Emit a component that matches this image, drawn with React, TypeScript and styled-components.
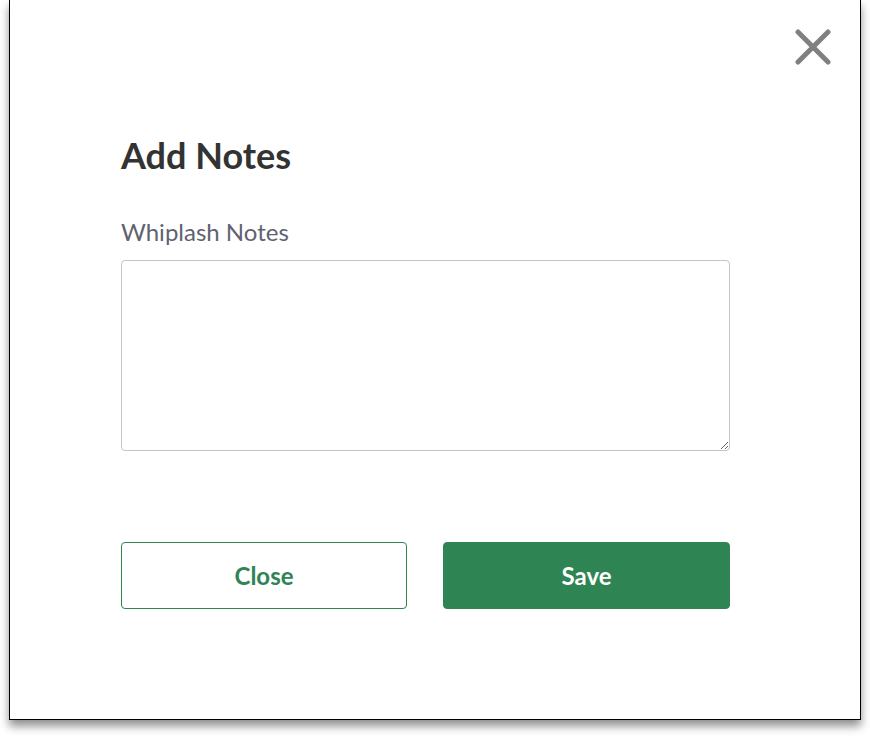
import React from "react";
import styled, { createGlobalStyle } from "styled-components";

const Global = createGlobalStyle`
  html, body { margin: 0; padding: 0; background: #fff; }
  body { font-family: Lato, "Open Sans", sans-serif; }
  * { box-sizing: border-box; }
`;

const Page = styled.div`
  width: 870px;
  height: 738px;
  padding-left: 9px;
  overflow: hidden;
`;

const Modal = styled.div`
  position: relative;
  width: 852px;
  height: 720px;
  background: #fff;
  border: 1px solid #000;
  border-top: none;
  box-shadow: 0 6px 9px rgba(0, 0, 0, 0.45);
  padding: 0 0 0 111px;
  display: flex;
  flex-direction: column;
`;

const CloseIcon = styled.button`
  position: absolute;
  top: 29px;
  right: 29px;
  width: 36px;
  height: 36px;
  padding: 0;
  border: none;
  background: none;
  display: flex;
  align-items: center;
  justify-content: center;
`;

const Content = styled.div`
  width: 609px;
  display: flex;
  flex-direction: column;
  padding-top: 135px;
`;

const Title = styled.h2`
  margin: 0;
  font-family: Lato, sans-serif;
  font-weight: 700;
  font-size: 36px;
  line-height: 40px;
  color: #333333;
`;

const Label = styled.label`
  margin-top: 42px;
  font-family: Lato, sans-serif;
  font-size: 24px;
  line-height: 30px;
  color: #5f6270;
`;

const TextArea = styled.textarea`
  margin-top: 13px;
  width: 609px;
  height: 191px;
  border: 1px solid #c4c4c4;
  border-radius: 4px;
  resize: vertical;
  font-family: Lato, sans-serif;
  font-size: 16px;
  outline: none;
`;

const Buttons = styled.div`
  margin-top: 91px;
  display: grid;
  grid-template-columns: 286px 287px;
  column-gap: 36px;
`;

const Button = styled.button<{ $primary?: boolean }>`
  height: 67px;
  border-radius: 4px;
  border: 1px solid #2e8452;
  background: ${(p) => (p.$primary ? "#2e8452" : "#fff")};
  color: ${(p) => (p.$primary ? "#fff" : "#2e8452")};
  font-family: Lato, sans-serif;
  font-weight: 700;
  font-size: 24px;
  cursor: pointer;
`;

export default function App() {
  return (
    <Page>
      <Global />
      <Modal>
        <CloseIcon aria-label="Close">
          <svg width="36" height="36" viewBox="0 0 36 36">
            <path
              d="M3 3 L33 33 M33 3 L3 33"
              stroke="#808080"
              strokeWidth="5"
              strokeLinecap="round"
            />
          </svg>
        </CloseIcon>
        <Content>
          <Title>Add Notes</Title>
          <Label>Whiplash Notes</Label>
          <TextArea />
          <Buttons>
            <Button>Close</Button>
            <Button $primary>Save</Button>
          </Buttons>
        </Content>
      </Modal>
    </Page>
  );
}
